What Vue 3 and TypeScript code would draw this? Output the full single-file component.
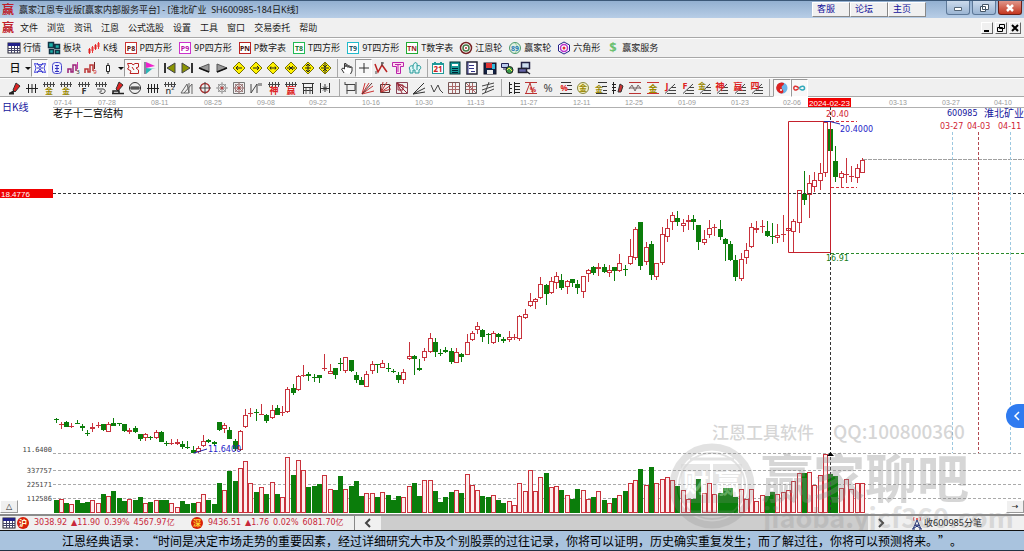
<script setup lang="ts">
type Icon = { name: string; art: string; pressed?: boolean; narrow?: boolean }
type Group = { id: string; items: Icon[] }
type Candle = { x: number; up: boolean; top: number; bottom: number; high: number; low: number; vol: number }

/* ---------- icon drawing helpers (14 x 14 grid) ---------- */
const p = (d: string, stroke = '#222', w = 1, fill = 'none') =>
  `<path d="${d}" stroke="${stroke}" stroke-width="${w}" fill="${fill}"/>`
const t = (s: string, x: number, y: number, size: number, fill = '#222', weight = 400) =>
  `<text x="${x}" y="${y}" font-size="${size}" fill="${fill}" font-weight="${weight}" text-anchor="middle">${s}</text>`
const ticks = p('M1 3.5H13M2.5 1V6M5.5 1V6M8.5 1V6M11.5 1V6', '#444')
const stairs = p('M4 12.5H13M6 9.5H13M8 6.5H13M2 12.5L12 3', '#444')
const badge = (s: string, frame: string, ink: string) =>
  `<rect x="1.5" y="1.5" width="11" height="11" fill="#fff" stroke="${frame}"/>` + t(s, 7, 10, 7, ink, 700)
const diamond = (inner: string) =>
  p('M7 1L13 7L7 13L1 7Z', '#777000', 1, '#fff200') + p(inner, '#222')
const pen = p('M5 9L8 2L12 5L7 11Z', '#333', 1, '#d22') + p('M2 12.5L6 10M1 12.5H6', '#222', 2)
const frame = (c: string) => p('M1.5 1.5H12.5V12.5H1.5Z', c)

/* ---------- menus and toolbars ---------- */
const links = ['客服', '论坛', '主页']
const menus = ['文件', '浏览', '资讯', '江恩', '公式选股', '设置', '工具', '窗口', '交易委托', '帮助']

const modules = [
  { label: '行情', art: `<rect x="1" y="2" width="12" height="10" fill="#fff" stroke="#223"/><rect x="1" y="2" width="12" height="3" fill="#228"/>` + p('M1 7.5H13M1 9.5H13M4.5 5V12M7.5 5V12M10.5 5V12', '#446') },
  { label: '板块', art: p('M1.5 1.5H6.5V6.5H1.5ZM8 3.500H12.500V7.500H8ZM2.500 8.500H6.500V12.500H2.500ZM8.500 9.500H12.500V12.500H8.500Z', '#134', 1.5, '#1ab0a8') },
  { label: 'K线', art: p('M2.500 7V13M5.500 5V12M8.500 3V9M11.500 1V8', '#e33') + p('M2.500 8V12M8.500 4V8', '#d22', 2) + p('M5.500 6V10M11.500 2V6', '#e33', 2) },
  { label: 'P四方形', art: badge('P8', '#c33', '#511') },
  { label: '9P四方形', art: badge('P9', '#c3c', '#b1a') },
  { label: 'P数字表', art: badge('PN', '#b22', '#411') },
  { label: 'T四方形', art: badge('T8', '#2b5', '#273') },
  { label: '9T四方形', art: badge('T9', '#2bc', '#256') },
  { label: 'T数字表', art: badge('TN', '#2a3', '#922') },
  { label: '江恩轮', art: '<circle cx="7" cy="7" r="5.5" fill="#fff" stroke="#722" stroke-width="1.5"/><circle cx="7" cy="7" r="3" fill="none" stroke="#474" stroke-width="1.5"/><circle cx="7" cy="7" r="1" fill="#a33"/>' },
  { label: '赢家轮', art: '<circle cx="7" cy="7" r="5.5" fill="#e0f0e4" stroke="#4a9a6a"/>' + p('M7 2Q12 7 7 12', '#9c9') + t('89', 7, 10, 7, '#2a7bb5', 700) },
  { label: '六角形', art: p('M7 1L12.500 4V10L7 13L1.500 10V4Z', '#228', 1, '#fff') + '<circle cx="7" cy="7" r="3.5" fill="#fff" stroke="#b3c" stroke-width="1.5"/><circle cx="7" cy="7" r="1.500" fill="#d33"/>' },
  { label: '赢家服务', art: t('$', 7, 11, 13, '#6cc070', 700) },
]

const chartTools: Group[] = [
  {
    id: 'period',
    items: [
      { name: '周期', art: t('日', 7, 11, 11, '#111', 500) },
      { name: '选择周期', narrow: true, art: p('M1 6H7L4 9Z', 'none', 1, '#111') },
      { name: '线型', pressed: true, art: p('M1.500 2.500Q7 5 12.500 2.500L11 7L12.500 11.500Q7 9 1.500 11.500L3 7Z', '#44d') + p('M4 2L7 6L10 2M4 12L7 8L10 12M4 7H10', '#33c') },
      { name: '信息', art: `<rect x="2.500" y="1.500" width="9" height="11" rx="3" fill="#eef" stroke="#44c"/>` + p('M5 4.500H9M5 7.500H9M5 10.500H9M7 4V10', '#33b') },
      { name: '指标三', art: p('M1 12V8H4V11H6V4H9V10', '#927', 1.5) + p('M10.500 1V8', '#c3a') + t('3', 11, 13, 6, '#222') },
      { name: '指标九', art: p('M1 12V8H4V11H6V4H9V10', '#b33', 1.5) + p('M10.500 1V8', '#722') + t('9', 11, 13, 6, '#c22') },
      { name: '蜡烛', art: p('M5.500 4.500H8.500V10.500H5.500ZM7 2V4M7 11V13', '#222', 1, '#fff') },
      { name: '选择蜡烛', narrow: true, art: p('M1 6H7L4 9Z', 'none', 1, '#111') },
      { name: '结构', pressed: true, art: p('M1.500 2.500H6L7 4L9 2.500H12.500V6L10 7L12.500 9V12.500H4L5 10L1.500 8L3 6ZM6 6L8 9', '#b22') },
      { name: '旗标', art: p('M2 1V13', '#224') + p('M3 1L12 5L3 7Z', 'none', 1, '#e2c') + p('M3 7L13 8H9L3 13Z', 'none', 1, '#2ab5b5') },
    ],
  },
  {
    id: 'move',
    items: [
      { name: '首页', art: p('M2 2V12', '#333', 2) + p('M12 2V12L4 7Z', '#444', 1, '#8a9400') },
      { name: '末页', art: p('M12 2V12', '#333', 2) + p('M2 2V12L10 7Z', '#444', 1, '#8a9400') },
      { name: '上移', art: p('M12 3V11L7 9L2 7Z', '#555', 1, '#999') + p('M12 11L2 7', '#111', 1.5) },
      { name: '下移', art: p('M2 3V11L7 9L12 7Z', '#555', 1, '#999') + p('M2 11L12 7', '#111', 1.5) },
      { name: '左移', art: diamond('M10 7H4M6 5L4 7L6 9') },
      { name: '右移', art: diamond('M4 7H10M8 5L10 7L8 9') },
      { name: '缩放', art: diamond('M4 7H10M5 5.500L4 7L5 8.500M9 5.500L10 7L9 8.500') },
      { name: '压缩', art: diamond('M3 7H11M5 5L7 7L5 9M9 5L7 7L9 9') },
      { name: '纵向扩展', art: diamond('M7 3V11M5 5L7 3L9 5M5 9L7 11L9 9M4 7H10') },
      { name: '纵向压缩', art: diamond('M7 2V12M5 4L7 6L9 4M5 10L7 8L9 10M3 7H11') },
    ],
  },
  {
    id: 'cursor',
    items: [
      { name: '拖动', art: p('M4 12L1.500 8L3 7L4.500 8V2.500H6V6V4H8V6.500V5H10V7V6H12V10L10.500 13', '#333', 1, '#fff') },
      { name: '十字光标', pressed: true, art: p('M7 2V12M2 7H12', '#333') },
      { name: '波段', art: p('M1 3L4 11L8 4L13 11', '#b22', 1.5) + p('M2 10V13M7 2H10M8 1V5', '#444') },
      { name: '清理', art: p('M1.500 1.500H12.500V5.500H9.500V12.500H5.500V5.500H1.500ZM4 3.500H10M7 4V11', '#b2a', 1, '#fde') },
      { name: '云图', art: p('M2 9C0 6 3 4 5 5C6 0 10 1 9 5C13 3 14 8 11 9V12H7V9H5V12H2ZM5 5V8M9 5V9', '#299', 1, '#dff7f7') },
    ],
  },
  {
    id: 'utility',
    items: [
      { name: '日历', art: `<rect x="1.500" y="2.500" width="11" height="10" fill="#fff" stroke="#299"/>` + p('M1 3H13M4 1V3M10 1V3', '#299', 2) + t('21', 7, 11, 8, '#c22', 700) },
      { name: '计算器', art: `<rect x="2" y="1" width="10" height="12" fill="#189a9a" stroke="#033"/><rect x="4" y="3" width="6" height="2" fill="#fff"/>` + p('M4 7.500H10M4 9.500H10M4 11.500H10', '#023', 1) },
      { name: '记事', art: `<rect x="2" y="1" width="10" height="12" fill="#fff" stroke="#223" stroke-width="1.500"/>` + p('M4 4.500H9M4 7.500H9M6 10.500H10M3 1V13', '#338') },
      { name: '保存', art: `<rect x="1" y="2" width="12" height="11" fill="#124" stroke="#112"/><rect x="3" y="2" width="6" height="5" fill="#d33"/><rect x="9" y="3" width="3" height="5" fill="#3bd"/><rect x="4" y="9" width="6" height="4" fill="#eee"/>` },
      { name: '网络', art: p('M1.500 2.500H8.500V6.500H1.500ZM3 8H6', '#225', 1, '#bce') + '<circle cx="9.500" cy="9" r="3.500" fill="#3a9a4a" stroke="#222"/>' + p('M7 9L9 7L12 10', '#fe5') },
      { name: '打印', art: p('M4.500 1.500H12.500V7.500H4.500Z', '#224', 1.5, '#cde') + p('M1.500 7.500H9.500V11.500H1.500ZM9 10L13 13', '#223', 1.5, '#66a') },
    ],
  },
]

const web = (c: string) => p('M7 1V13M1 7H13M3 3L11 11M11 3L3 11', c) + p('M7 3L10 4L11 7L10 10L7 11L4 10L3 7L4 4Z', c) + '<circle cx="7" cy="7" r="1.500" fill="#b44"/>'
const drawTools: Group[] = [
  {
    id: 'timing',
    items: [
      { name: '画笔', art: pen },
      { name: '等分线', art: p('M1 7.500H13M3.500 3V12M7 3V12M10.500 3V12', '#222') },
      { name: '黄金时间', art: ticks + t('金', 7, 13, 8, '#998800', 700) },
      { name: '黄金周期', art: ticks + t('金', 7, 13, 8, '#998800', 700) },
      { name: '斐波那契', art: ticks + t('F', 7, 13, 9, '#333', 700) },
      { name: '螺旋周期', art: ticks + p('M3 8H9C12 8 12 12.500 8 12.500C5 12.500 5 9.500 8 10', '#444') },
      { name: '标记', art: p('M5 8L8 1L12 4L7 10Z', '#333', 1, '#d22') + p('M2 13V10H8V13M1 12.500H13', '#222', 1.5) },
      { name: '圆周', art: '<circle cx="7" cy="7" r="5.500" fill="#eee" stroke="#333"/>' + p('M1 7H13M4 5V9M6 5V9M8 5V9M10 5V9', '#222') },
      { name: '时间线', art: p('M1 7.500H13M2.500 3V12M5.500 3V12M8.500 3V12M11.500 3V12', '#222') },
      { name: '平方', art: ticks + t('n²', 7, 13, 9, '#333', 500) },
      { name: '角度', art: p('M1 12L7 3L9 12ZM4 12L12 3V13M9 2V12', '#666') },
      { name: '定位', art: '<circle cx="7" cy="7" r="4.500" fill="none" stroke="#a33" stroke-width="1.500"/>' + p('M7 1V13M1 7H13', '#444') },
      { name: '八卦', art: web('#999') },
      { name: '九宫', art: frame('#777') + web('#977') },
      { name: '波浪', art: p('M2 3V12L8 3V12M10 2V5M12 2V5', '#444') },
      { name: '神奇时间', art: ticks + t('神', 7, 13, 9, '#d22', 700) },
      { name: '赢家时间', art: ticks + t('赢', 7, 13, 9, '#d22', 700) },
      { name: '区间', art: p('M1 2.500H13M2 6.500H12M2 9.500H12M2.500 2V13M11.500 2V13', '#333') + p('M5 7V13M9 7V13', '#555') },
      { name: '间距', art: p('M2.500 2V12M11.500 2V12M7 3V11M3 7.500H11M5 5.500L7 7.500L5 9.500M9 5.500L7 7.500L9 9.500', '#333') },
    ],
  },
  {
    id: 'angles',
    items: [
      { name: '矩形', art: p('M3 3.500H11V9.500H3ZM1 1V4M3 9V13M12 1V13M1 3.500H3', '#444') },
      { name: '江恩扇', art: p('M1 13L4 2M1 13L8 2M1 13L12 5M1 13L13 10', '#c33') + p('M1 13L11 2', '#533') },
      { name: '扇形箱', art: p('M2.500 3.500H11.500V11.500H2.500Z', '#533') + p('M3 11L5 1M3 11L9 1M3 11L13 4M3 11L13 8', '#b33') },
      { name: '江恩箱', art: frame('#845') + p('M2 2L12 12M2 2L12 7M2 2L7 12M3 4H8V9H3Z', '#923') },
      { name: '角度线', art: p('M1 13L12 2M1 13L13 7M1 13L13 11', '#333') },
      { name: '折线', art: p('M1 4L4 11L8 4L10 9L13 12', '#444') },
      { name: '方格', art: frame('#755') + p('M2 5.500H12M2 8.500H12M5.500 2V12M8.500 2V12', '#a66') },
      { name: '比例格', art: frame('#555') + p('M2 5.500H12M2 8.500H12M5.500 2V12M8.500 2V12M2 2L12 12', '#a66') },
      { name: '通道', art: p('M1 5L13 2M1 9L13 5M1 13L13 8M4 12L8 1', '#444') },
    ],
  },
  {
    id: 'ratios',
    items: [
      { name: '刻度', art: p('M2.500 1V13M7.500 1V13M2 3.500H5M2 7.500H5M2 11.500H5M7 2.500H13M7 5.500H13M7 8.500H13M7 11.500H13', '#222') },
      { name: '百分比线', art: p('M1 1.500H13M1 12.500H13M2 12L6 2L9 12', '#b33') + t('%', 9, 11, 7, '#c22', 700) },
      { name: '百分比', art: t('%', 7, 11, 11, '#444') },
      { name: '百分比段', art: p('M2 1.500H12M8 4.500H13M8 8.500H13M1 12.500H13', '#333') + t('%', 5, 10, 8, '#d22', 700) },
      { name: '黄金圆', art: '<circle cx="7" cy="7" r="5.500" fill="#f4f0c0" stroke="#884"/>' + t('金', 7, 10, 8, '#998800', 700) },
      { name: '黄金线', art: p('M4 1.500H13M8 5.500H13M9 9.500H13M2 12.500H13', '#333') + t('金', 5, 11, 8, '#998800', 700) },
      { name: '竖标', art: p('M2.500 1V13M1 3.500H5M1 6.500H5M1 9.500H5', '#222') + p('M7 11L9 3L12 5L10 11Z', '#333', 1, '#c33') },
      { name: '波幅', art: p('M1 1.500H13M1 12.500H13', '#b33') + p('M1 8L4 4L7 10L10 4L13 8M1 7H13', '#766') },
      { name: '黄金区', art: p('M1 1.500H13M1 12.500H13', '#c33') + t('金', 7, 11, 9, '#998800', 700) },
      { name: '江恩线', art: stairs + t('J', 4, 8, 9, '#d22', 700) },
      { name: '斐波线', art: stairs + t('F', 4, 8, 9, '#d22', 700) },
      { name: '黄金角', art: stairs + t('金', 4, 8, 8, '#998800', 700) },
      { name: '神奇线', art: stairs + t('神', 5, 9, 9, '#d22', 700) },
      { name: '赢家线', art: stairs + t('赢', 5, 9, 9, '#d22', 700) },
      { name: '四方线', art: stairs + t('四', 5, 8, 9, '#d22', 700) },
    ],
  },
  {
    id: 'extras',
    items: [
      { name: '太极', pressed: true, art: '<circle cx="7" cy="7" r="5.500" fill="#6ab4e8"/>' + p('M9 2A5.500 5.500 0 1 0 7 12.500C11 10 5 8 7 5C8 4 9 4 9 2Z', 'none', 1, '#d22') + '<circle cx="6" cy="9" r="1" fill="#fff"/>' },
      { name: '循环', pressed: true, art: p('M7 7C4 4 1 5 2 8C3 10 5 9 7 7', '#d33', 1.5) + p('M7 7C10 4 13 5 12.500 8C11 10 9 9 7 7', '#3ab', 1.5) },
    ],
  },
]

/* ---------- price series: colour, body top, body bottom, high, low ----------
   Each segment is measured in thirds of a pixel below its own base line. */
const segments: [number, string][] = [
  [1200, `g58 61 55 68|r73 75 65 88|g67 81 64 82|r77 79 70 83|g70 71 60 72|g79 84 73 93|g98 100 90 108|r82 88 70 95|r75 77 67 85|g73 90 71 92|r73 95 66 95|g69 77 54 79|g70 72 70 78|g73 93 72 95|r91 96 85 102|g84 97 78 98|g101 116 101 122|r103 115 98 122|g110 115 107 121|r97 114 90 117|g96 125 94 126|g129 131 124 139|r128 130 117 134|r127 131 118 136|g133 140 123 146|g140 145 124 147|g150 158 138 160|r145 157 138 158|r122 138 104 140|g121 126 117 130|g126 131 124 138|g65 90 65 92|r76 88 70 98|g90 116 80 118|g123 147 118 152|r92 150 90 152|r45 82 28 85|r38 43 24 50`],
  [1020, `g216 219 208 242|r221 223 193 224|g224 244 222 248|r210 235 196 236|g205 224 194 226|r216 218 199 228|r148 216 140 220|g145 158 133 165|r109 151 104 152|r105 107 75 110|g102 108 97 124|g110 112 102 125|g106 113 105 128|r84 87 41 93|r92 101 72 102|g84 104 83 118|g68 73 55 94|r52 92 50 98|g60 94 59 97|g105 120 95 130|g121 134 112 136|r103 140 92 142|r73 94 64 103|g73 76 72 99|r69 83 60 85|g84 87 70 96|g92 96 86 98|g105 120 96 130|r96 119 86 132|r49 58 5 60|g49 58 44 104|g83 90 56 92|r34 55 24 62|r-5 35 -20 38|g7 36 -5 50`],
  [570, `g488 491 477 498|g481 486 470 490|g483 515 475 523|r487 520 473 520|g492 500 490 515|r457 494 433 495|r428 451 423 452|r408 421 397 432|g420 440 418 455|g431 436 429 461|r430 458 422 463|g431 440 430 455|g447 452 440 460|r442 451 424 457|r442 444 431 450|r379 448 376 453|r373 385 358 387|r334 347 309 350|r328 337 325 356|r283 325 261 328|g284 311 283 344|r273 310 262 312|r259 280 245 298|g270 293 252 300|r274 292 269 312|g268 280 266 292|g282 294 269 312|r259 305 257 325|r241 253 237 277|g230 248 229 256|r230 238 218 259|g231 246 223 250|r241 250 226 262|g231 244 230 274|r220 244 193 245|g237 239 225 257|r198 223 148 224|r118 204 112 210|g97 227 96 240|r172 217 155 226|g162 255 152 270|r220 260 220 269|r133 220 112 226|r115 142 86 155|r76 97 66 121|g83 96 63 107|r100 109 88 125|r91 97 76 119|g88 96 74 121|g106 155 105 179|r146 158 119 166|r115 136 91 144|r110 115 103 139|g117 141 91 150|g147 161 145 214|g162 210 152 212|g211 260 196 273`],
  [270, `r507 567 490 573|r481 505 460 522|r412 470 399 475|r415 421 394 430|r408 411 390 428|g423 437 393 440|g438 440 398 462|r436 443 402 458|r432 434 376 457|r415 423 412 425|r394 427 388 487|r301 398 299 428|g313 330 244 345|r280 316 255 385|r271 290 247 305|r250 274 218 300|r95 250 92 262|g117 184 110 186|g213 262 168 275|r250 265 242 292|r253 256 205 278|r257 259 228 275|r235 265 222 278|r209 248 205 250`],
]
const volumes =
  '38 43 29 28 38 31 32 40 31 56 52 66 45 35 41 39 49 31 32 40 38 38 31 19 36 28 31 34 58 38 28 91 70 127 95 136 157 91 ' +
  '63 79 58 94 56 49 169 115 160 130 79 82 86 115 73 70 111 73 81 97 52 61 61 47 64 55 38 52 49 82 90 52 100 100 65 34 47 62 70 61 117 83 70 52 47 55 40 ' +
  '29 37 25 91 67 128 67 108 119 78 82 68 55 43 73 70 43 47 67 38 31 45 55 65 91 100 133 85 137 91 101 108 100 81 70 43 43 101 61 91 58 61 74 76 49 73 43 ' +
  '73 37 55 52 64 58 64 70 97 121 120 124 85 115 178 118 111 76 101 73 91 91'
const heights = volumes.split(' ').map(Number)
const firstX = 56
const pitch = 5.27
const volumeBase = 513

const candles: Candle[] = segments
  .flatMap(([base, rows]) =>
    rows.split('|').map((row) => {
      const [top, bottom, high, low] = row.slice(1).split(' ').map((n) => Math.round((base + Number(n)) / 3))
      return { up: row[0] === 'r', top, bottom, high, low }
    }),
  )
  .map((c, i) => ({ ...c, x: Math.round(firstX - 0.5 + i * pitch), vol: Math.round((heights[i] ?? 40) / 3) }))

const dates: [string, number][] = [
  ['07-14', 54], ['07-28', 98], ['08-11', 151], ['08-25', 204], ['09-08', 257], ['09-22', 309],
  ['10-16', 362], ['10-30', 415], ['11-13', 467], ['11-27', 520], ['12-11', 573], ['12-25', 625],
  ['01-09', 678], ['01-23', 731], ['02-06', 783], ['03-13', 889], ['03-27', 942], ['04-10', 994],
]
const gridLines = [453, 470, 484, 498]
const scale: [string, number][] = [['11.6400', 452], ['337757', 473], ['225171', 487], ['112586', 501]]
const forecasts = [
  { label: '03-27', text: 940, line: 952, cls: 'sky' },
  { label: '04-03', text: 967, line: 978, cls: 'maroon' },
  { label: '04-11', text: 998, line: 1010, cls: 'sky' },
]
const indices = [
  { mark: '沪', tint: '#ffffdd', values: ['3038.92', '▲11.90', '0.39%', '4567.97亿'] },
  { mark: '深', tint: '#ffdd33', values: ['9436.51', '▲1.76', '0.02%', '6081.70亿'] },
]
</script>

<template>
  <div class="window">
    <header class="titlebar">
      <svg class="logo" viewBox="0 0 14 14" aria-hidden="true"><text x="7" y="11" text-anchor="middle">赢</text></svg>
      <h1 class="caption">赢家江恩专业版[赢家内部服务平台] - [淮北矿业&nbsp; SH600985-184日K线]</h1>
      <nav class="links">
        <a v-for="l in links" :key="l" href="#">{{ l }}</a>
      </nav>
      <div class="controls">
        <button aria-label="最小化"><svg viewBox="0 0 12 10"><path d="M2.500 4.500H9.500V7.500H2.500Z" fill="#fff" stroke="#567" /></svg></button>
        <button aria-label="还原"><svg viewBox="0 0 12 10"><path d="M4.500 1.500H10.500V6.500H4.500ZM2.500 3.500H7.500V8.500H2.500Z" fill="#fff" stroke="#456" /></svg></button>
        <button class="close" aria-label="关闭"><svg viewBox="0 0 12 10"><path d="M3 2L9 8M9 2L3 8" stroke="#fff" stroke-width="2.500" /></svg></button>
      </div>
    </header>

    <div class="menubar">
      <svg class="logo" viewBox="0 0 14 14" aria-hidden="true"><text x="7" y="11" text-anchor="middle">赢</text></svg>
      <nav class="menus">
        <button v-for="m in menus" :key="m">{{ m }}</button>
      </nav>
      <div class="child-controls">
        <button aria-label="最小化子窗口"><svg viewBox="0 0 10 10"><path d="M2 8H7" stroke="#000" stroke-width="2" /></svg></button>
        <button aria-label="还原子窗口"><svg viewBox="0 0 10 10"><path d="M3.500 1.500H8.500V5.500H3.500ZM1.500 4.500H6.500V8.500H1.500Z" fill="#f0f0f0" stroke="#000" /></svg></button>
        <button aria-label="关闭子窗口"><svg viewBox="0 0 10 10"><path d="M2 2L8 8M8 2L2 8" stroke="#000" stroke-width="2" /></svg></button>
      </div>
    </div>

    <div class="toolbar modules">
      <button v-for="m in modules" :key="m.label">
        <svg class="icon" viewBox="0 0 14 14" aria-hidden="true" v-html="m.art"></svg>
        <span>{{ m.label }}</span>
      </button>
    </div>

    <div v-for="(bar, n) in [chartTools, drawTools]" :key="n" class="toolbar">
      <div v-for="g in bar" :key="g.id" class="group" :class="g.id">
        <button v-for="i in g.items" :key="i.name" :aria-label="i.name" :class="{ pressed: i.pressed, narrow: i.narrow }">
          <svg class="icon" :viewBox="i.narrow ? '0 0 8 14' : '0 0 14 14'" aria-hidden="true" v-html="i.art"></svg>
        </button>
      </div>
    </div>

    <main class="chart">
      <svg class="plot" viewBox="0 97 1024 417" role="img" aria-label="淮北矿业日K线图">
        <text class="song navy" x="2" y="111">日K线</text>
        <g class="axis">
          <text v-for="[d, x] in dates" :key="d" :x="x" y="105">{{ d }}</text>
        </g>
        <path class="rule" d="M53 107.500H1024" />
        <text class="song" x="53" y="117">老子十二宫结构</text>

        <g class="grid">
          <path v-for="y in gridLines" :key="y" :d="`M53 ${y}.5H1022`" />
        </g>
        <g class="scale">
          <text v-for="[s, y] in scale" :key="s" x="52" :y="y">{{ s }}</text>
        </g>

        <g v-for="c in candles" :key="c.x" :class="c.up ? 'up' : 'down'">
          <path :d="`M${c.x + 0.5} ${c.high}V${c.top}M${c.x + 0.5} ${c.bottom}V${c.low}`" />
          <path v-if="c.bottom - c.top < 2" :d="`M${c.x - 2} ${c.top}.5H${c.x + 3}`" />
          <rect v-else :x="c.x - 1.5" :y="c.top + 0.5" width="4" :height="c.bottom - c.top - 1" />
          <rect class="vol" :x="c.x - 1.5" :y="volumeBase - c.vol + 0.5" width="4" :height="c.vol - 1" />
        </g>

        <path class="dash ink" d="M53 193.500H1024" />
        <path class="dash ink" d="M830.500 107V513" />
        <path class="dash silver" d="M863 159.500H1024" />
        <path class="dash green" d="M831 253.500H1024" />
        <path class="box" d="M788.500 121.500H830.500V252.500H788.500Z" />
        <path class="dash red" d="M831 121.500H857M831 187.500H857" />
        <path class="pointer" d="M824 121.500H830L840 124M194 453L207 449" />
        <path d="M827 456L830.500 452L834 456Z" />

        <g v-for="f in forecasts" :key="f.label">
          <path class="dash" :class="f.cls" :d="`M${f.line}.5 132V453`" />
          <text class="num crimson" :x="f.text" y="129">{{ f.label }}</text>
        </g>
        <text class="num navy" x="947" y="116">600985</text>
        <text class="song navy" x="984" y="117">淮北矿业</text>
        <text class="num crimson" x="826" y="117">20.40</text>
        <text class="num blue" x="840" y="132">20.4000</text>
        <text class="num leaf" x="826" y="261">16.91</text>
        <text class="num blue" x="208" y="452">11.6400</text>

        <rect class="flag" x="808" y="98" width="43" height="9" />
        <text class="flag-text" x="809" y="106">2024-02-23</text>
        <rect class="flag" x="0" y="189" width="53" height="9" />
        <text class="flag-text" x="1" y="197">18.4776</text>
      </svg>
      <button class="corner left" aria-label="展开">△</button>
      <button class="corner right" aria-label="向右">→</button>
      <button class="drawer" aria-label="打开侧栏">
        <svg viewBox="0 0 18 24"><path d="M18 0H12A12 12 0 0 0 12 24H18Z" fill="#2f7bf0" /><path d="M13 8L9 12L13 16" fill="none" stroke="#fff" stroke-width="1.500" /></svg>
      </button>
    </main>

    <footer class="status">
      <svg class="icon" viewBox="0 0 14 14" aria-hidden="true"><rect x="1" y="2" width="12" height="10" fill="#fff" stroke="#223" /><rect x="1" y="2" width="12" height="3" fill="#228" /><path d="M1 7.500H13M1 9.500H13M4.500 5V12M7.500 5V12M10.500 5V12" stroke="#446" /></svg>
      <span v-for="x in indices" :key="x.mark" class="ticker">
        <svg class="icon" viewBox="0 0 14 14" aria-hidden="true"><circle cx="7" cy="7" r="6" fill="#d8200a" /><text x="7" y="10" font-size="8" font-weight="700" :fill="x.tint" text-anchor="middle">{{ x.mark }}</text></svg>
        <span v-for="v in x.values" :key="v">{{ v }}</span>
      </span>
      <div class="scroller">
        <button aria-label="向左滚动"><svg viewBox="0 0 10 10"><path d="M7 1L3 5L7 9" /></svg></button>
        <div class="thumb"></div>
        <button aria-label="向右滚动"><svg viewBox="0 0 10 10"><path d="M3 1L7 5L3 9" /></svg></button>
      </div>
      <div class="feed">
        <svg class="icon" viewBox="0 0 14 14" aria-hidden="true"><path d="M7 4L3 13M7 4L11 13M5 9H9M4 12L9 9M10 12L5 9M2 13H5M9 13H12" fill="none" stroke="#237" /><circle cx="7" cy="3" r="1" fill="#d33" /><path d="M4 1Q3 3 4 5M10 1Q11 3 10 5" fill="none" stroke="#d55" /></svg>
        <span>收600985分笔</span>
      </div>
    </footer>

    <p class="quote">江恩经典语录：“时间是决定市场走势的重要因素，经过详细研究大市及个别股票的过往记录，你将可以证明，历史确实重复发生；而了解过往，你将可以预测将来。”。</p>

    <svg class="watermark" viewBox="655 420 369 110" aria-hidden="true">
      <text x="712" y="439" font-size="17" font-weight="500">江恩工具软件</text>
      <text x="833" y="439" font-size="19" font-weight="500">QQ:100800360</text>
      <g class="seal">
        <circle cx="712" cy="486" r="39" stroke-width="7" />
        <circle cx="712" cy="486" r="33" stroke-width="2" />
        <path d="M690 459H734M690 512H734" stroke-width="3" />
      </g>
      <path class="tile" d="M681 464H710V503H681ZM713 464H742V503H713Z" />
      <text class="carved" x="683" y="493" font-size="26" font-weight="700">财</text>
      <text class="carved" x="715" y="493" font-size="26" font-weight="700">赢</text>
      <text x="761" y="498" font-size="52" font-weight="700">赢家聊吧</text>
      <text class="site" x="763" y="528" font-size="27" font-weight="700">jiaoba.yjcf360.com</text>
    </svg>
  </div>
</template>

<style>
body {
  margin: 0;
  overflow: hidden;
}
</style>

<style scoped>
.window {
  position: relative;
  display: flex;
  flex-direction: column;
  height: 100vh;
  background: #fff;
  color: #1a1a1a;
  font: 9px/12px "Noto Sans", "Noto Sans CJK SC", sans-serif;
  white-space: nowrap;
  text-spacing-trim: space-all;
}
button {
  margin: 0;
  padding: 0;
  border: 0;
  background: none;
  color: inherit;
  font: inherit;
}
svg {
  display: block;
}
.logo {
  width: 14px;
  height: 14px;
  flex: none;
  font: 700 12px "Noto Sans CJK SC", sans-serif;
  fill: #c0202a;
}
.titlebar {
  display: flex;
  align-items: center;
  box-sizing: border-box;
  height: 18px;
  padding: 0 2px 0 1px;
  border-top: 1px solid #3c5878;
  background: linear-gradient(#93b0d1, #b7cde6);
}
.caption {
  flex: 1;
  margin: 0 0 0 4px;
  font: inherit;
}
.links {
  display: flex;
}
.links a {
  box-sizing: border-box;
  width: 38px;
  height: 15px;
  padding-left: 4px;
  border: 1px solid;
  border-color: #fff #888 #888 #fff;
  background: #f0f0f0;
  color: #11119a;
  line-height: 12px;
  text-decoration: none;
}
.controls {
  display: flex;
  gap: 2px;
  margin-left: 20px;
  align-self: flex-start;
}
.controls button {
  display: grid;
  place-items: center;
  box-sizing: border-box;
  width: 24px;
  height: 14px;
  border: 1px solid #5d7898;
  border-top: 0;
  border-radius: 0 0 3px 3px;
  background: linear-gradient(#cbdaec, #9bb5d3);
}
.controls .close {
  border-color: #6b1f17;
  background: linear-gradient(#e0968a, #c4361f);
}
.controls svg {
  width: 12px;
  height: 10px;
}
.menubar {
  display: flex;
  align-items: center;
  box-sizing: border-box;
  height: 20px;
  padding: 0 3px 0 1px;
  border-bottom: 1px solid #a8a8a8;
  background: #f0f0f0;
}
.menus {
  display: flex;
  flex: 1;
  gap: 9px;
  margin-left: 5px;
}
.child-controls {
  display: flex;
  gap: 2px;
}
.child-controls button {
  box-sizing: border-box;
  width: 12px;
  height: 12px;
  border: 1px solid;
  border-color: #fff #666 #666 #fff;
}
.toolbar {
  display: flex;
  align-items: center;
  box-sizing: border-box;
  height: 20px;
  padding-left: 6px;
  border-bottom: 1px solid #a8a8a8;
  border-top: 1px solid #fff;
  background: #f0f0f0;
}
.toolbar:last-of-type {
  height: 19px;
}
.modules {
  gap: 6px;
  padding-left: 7px;
}
.modules button {
  display: flex;
  align-items: center;
  gap: 2px;
}
.icon {
  width: 14px;
  height: 14px;
  flex: none;
  font-family: "Noto Sans", "Noto Sans CJK SC", sans-serif;
}
.group {
  display: grid;
  grid-auto-flow: column;
  grid-auto-columns: 1fr;
}
.group + .group {
  border-left: 1px solid #a8a8a8;
}
.group button {
  display: grid;
  place-items: center;
  box-sizing: border-box;
  height: 18px;
  border: 1px solid transparent;
}
.group .pressed {
  border-color: #999 #fff #fff #999;
  background: #f8f8f8;
}
.period {
  display: flex;
  width: 152px;
}
.period button {
  width: 17px;
}
.period .narrow {
  width: 8px;
}
.period .narrow .icon {
  width: 8px;
}
.move {
  width: 173px;
  padding-left: 2px;
}
.cursor {
  width: 86px;
  margin-left: 3px;
}
.utility {
  width: 104px;
  margin-left: 3px;
  padding-left: 1px;
}
.timing {
  width: 328px;
}
.angles {
  width: 155px;
  margin-left: 5px;
  padding-left: 2px;
}
.ratios {
  width: 261px;
  margin-left: 4px;
  padding-left: 3px;
}
.extras {
  width: 35px;
  margin-left: 3px;
  padding-left: 3px;
}
.chart {
  position: relative;
  flex: 1;
  min-height: 0;
}
.plot {
  width: 100%;
  height: 100%;
}
.song {
  font: 10px "Noto Sans CJK SC", sans-serif;
}
.num {
  font: 8px "DejaVu Sans", sans-serif;
}
.navy {
  fill: #14149c;
}
.blue {
  fill: #2424c8;
}
.crimson {
  fill: #d02433;
}
.leaf {
  fill: #157a15;
}
.axis {
  font: 7px "Liberation Sans", sans-serif;
  fill: #9a9a9a;
}
.scale {
  font: 7px "DejaVu Sans Mono", monospace;
  fill: #444;
  text-anchor: end;
}
.rule {
  stroke: #b0b0b0;
}
.grid {
  stroke: #aaa;
  stroke-dasharray: 3 2;
}
.up {
  stroke: #c8323c;
  fill: #fff;
}
.up .vol {
  fill: #fdeeee;
}
.down {
  stroke: #0b7d0b;
  fill: #0b7d0b;
}
.dash {
  stroke-dasharray: 3 2;
  fill: none;
}
.ink {
  stroke: #333;
}
.silver {
  stroke: #a0a0a0;
  stroke-dasharray: 4 1;
}
.green {
  stroke: #2a8a2a;
}
.red {
  stroke: #d8303c;
}
.sky {
  stroke: #9cc8e0;
}
.maroon {
  stroke: #b04850;
}
.box {
  fill: none;
  stroke: #c4202c;
}
.pointer {
  fill: none;
  stroke: #2424a8;
}
.flag {
  fill: #f00000;
}
.flag-text {
  font: 8px "Liberation Sans", sans-serif;
  fill: #fff;
}
.corner {
  position: absolute;
  bottom: 1px;
  width: 18px;
  height: 13px;
  border: 1px solid;
  border-color: #fff #999 #999 #fff;
  background: #f0f0f0;
  font: 8px/10px "DejaVu Sans", sans-serif;
}
.left {
  left: 0;
}
.right {
  right: 0;
}
.drawer {
  position: absolute;
  right: 0;
  bottom: 86px;
  width: 18px;
  height: 24px;
}
.status {
  display: flex;
  align-items: center;
  box-sizing: border-box;
  height: 17px;
  padding-left: 2px;
  border-top: 2px solid #8c8c8c;
  border-bottom: 1px solid #111;
  background: #f0f0f0;
}
.ticker {
  display: flex;
  align-items: center;
  gap: 4px;
  width: 174px;
  color: #c8283a;
  font: 8px/12px "DejaVu Sans", "Noto Sans CJK SC", sans-serif;
}
.ticker + .ticker {
  width: 164px;
}
.scroller {
  display: flex;
  flex: 1;
  align-self: stretch;
  border-left: 1px solid #888;
}
.scroller button {
  display: grid;
  place-items: center;
  width: 26px;
}
.scroller svg {
  width: 10px;
  height: 10px;
  fill: none;
  stroke: #444;
  stroke-width: 2;
}
.scroller .thumb {
  flex: 1;
  background: #cdcdcd;
}
.feed {
  display: flex;
  align-items: center;
  width: 114px;
  margin-left: 16px;
  font: 9px/12px "Noto Sans", "Noto Sans CJK SC", sans-serif;
}
.quote {
  box-sizing: border-box;
  height: 20px;
  margin: 0;
  border-bottom: 1px solid #234;
  background: #a9c3de;
  color: #000;
  font: 12px/19px "Noto Sans CJK SC", sans-serif;
  text-align: center;
}
.watermark {
  position: absolute;
  right: 0;
  bottom: 21px;
  width: 369px;
  height: 110px;
  overflow: hidden;
  fill: #8c8c8c;
  font-family: "Noto Sans CJK SC", sans-serif;
  opacity: 0.35;
  pointer-events: none;
}
.seal {
  fill: none;
  stroke: #8c8c8c;
  opacity: 0.7;
}
.tile {
  opacity: 0.6;
}
.carved {
  fill: #fff;
}
.site {
  opacity: 0.7;
}
</style>
